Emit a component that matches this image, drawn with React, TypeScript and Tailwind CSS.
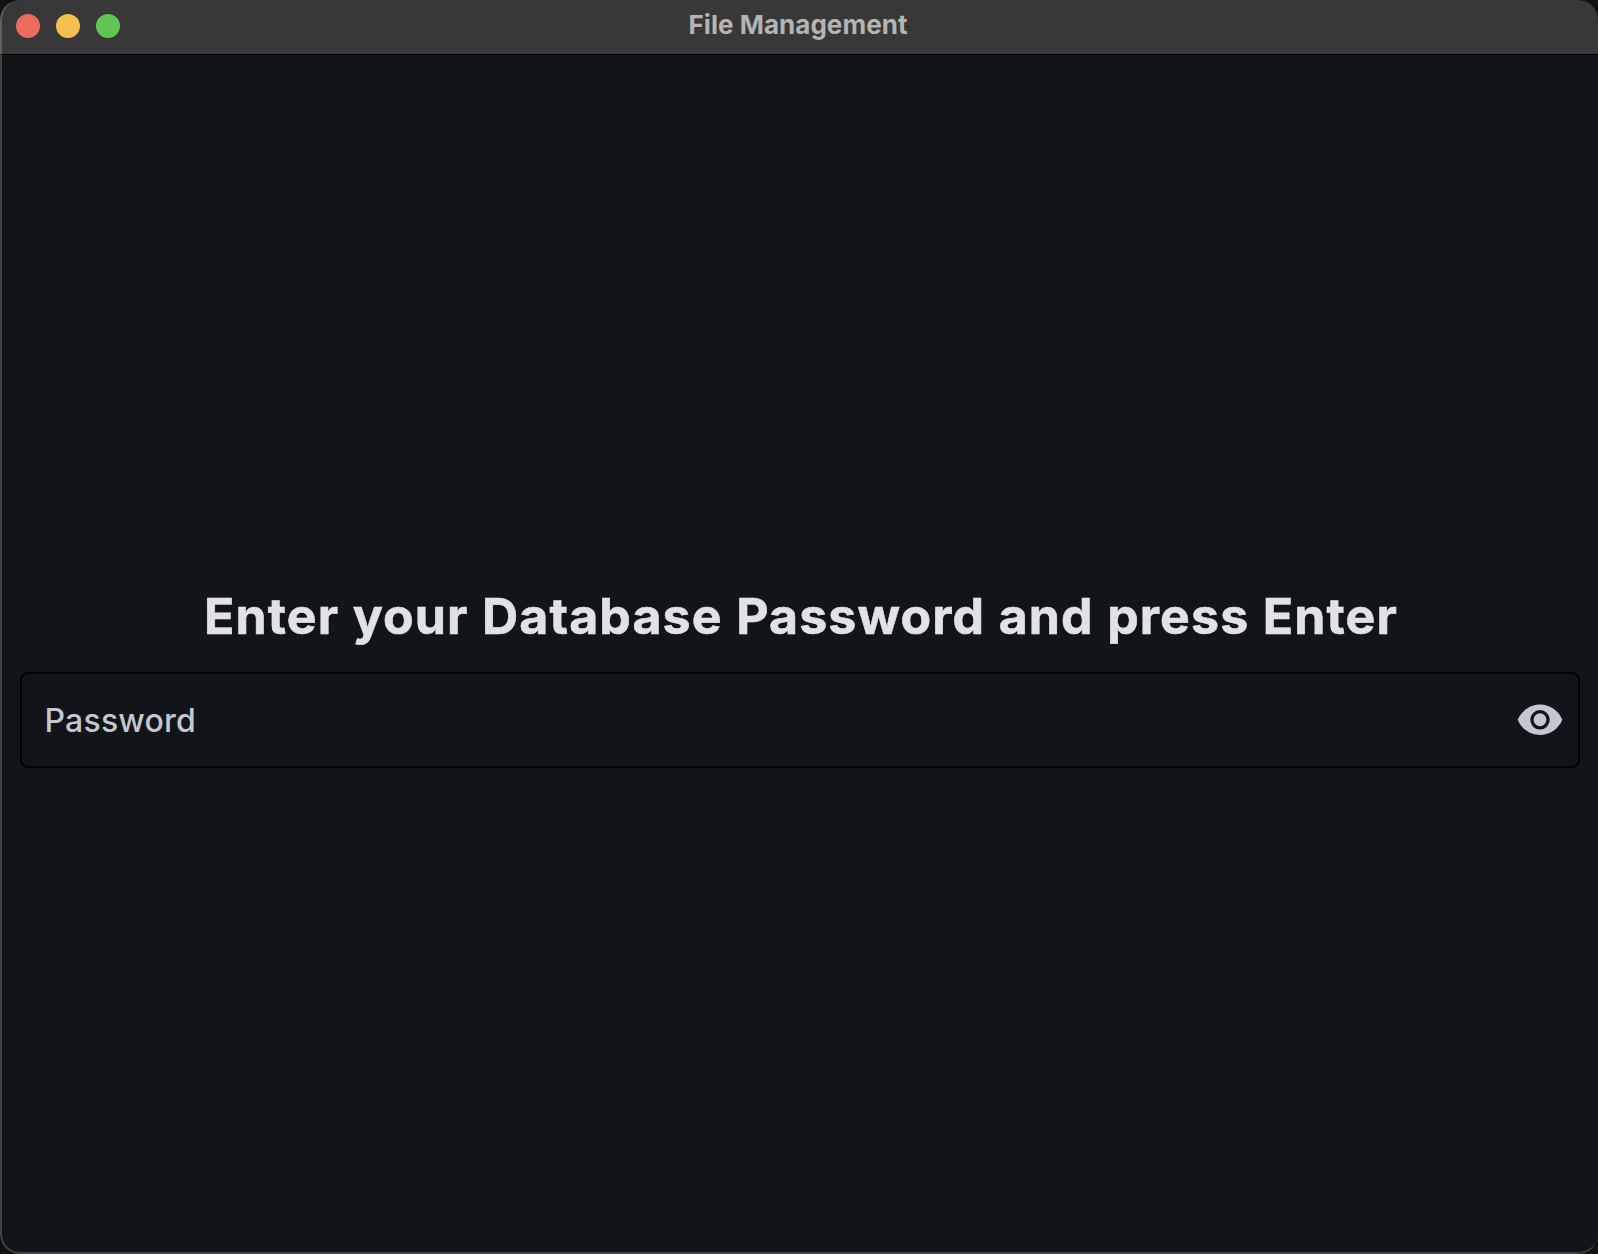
import { useState } from "react";

function TitleBar() {
  return (
    <header className="relative flex h-[55px] shrink-0 items-center border-b border-black bg-[#383838] pl-4 pb-[3px]">
      <div className="flex gap-4">
        <span className="size-6 rounded-full bg-[#ec6a5e]" />
        <span className="size-6 rounded-full bg-[#f4bf4f]" />
        <span className="size-6 rounded-full bg-[#61c554]" />
      </div>
      <h1 className="absolute right-0.5 left-0 top-[9px] text-center text-[26px] leading-8 font-bold tracking-[0.03px] text-[#b4b4b2]">
        File Management
      </h1>
    </header>
  );
}

function PasswordField() {
  const [visible, setVisible] = useState(false);
  return (
    <div className="flex h-24 items-center rounded-lg border-2 border-black pr-[14px] pl-[22.5px]">
      <input
        type={visible ? "text" : "password"}
        placeholder="Password"
        className="mt-0.5 min-w-0 flex-1 bg-transparent text-[32px] leading-10 font-[450] tracking-[0.2px] text-[#e1e2e8] outline-none placeholder:text-[#c3c7cf]"
      />
      <button aria-label="Show password" onClick={() => setVisible(!visible)}>
        <svg viewBox="0 0 24 24" className="block size-12">
          <path
            className="fill-[#c3c7cf]"
            d="M12 4.3C7 4.3 2.63 7.5.85 11.9c1.78 4.4 6.15 7.6 11.15 7.6s9.37-3.2 11.15-7.6C21.37 7.5 17 4.3 12 4.3z"
          />
          <circle cx="12" cy="11.9" r="4.05" className="fill-none stroke-[#111418] stroke-[1.65]" />
        </svg>
      </button>
    </div>
  );
}

export default function App() {
  return (
    <div className="h-screen bg-[#121212] font-['Inter',sans-serif]">
      <div className="relative flex h-full flex-col overflow-hidden rounded-[20px] bg-[#111418]">
        <TitleBar />
        <main className="flex flex-1 flex-col pr-[18px] pl-5 pt-[531px]">
          <h2 className="mb-[26px] pl-0.5 text-center text-[50px] leading-[60px] font-bold tracking-[1.12px] text-[#e1e2e8] [-webkit-text-stroke:0.6px_#e1e2e8] [word-spacing:0.6px]">
            Enter your Database Password and press Enter
          </h2>
          <PasswordField />
        </main>
        <div className="pointer-events-none absolute inset-0 rounded-[20px] border-b-2 border-l-2 border-b-white/20 border-l-white/20" />
      </div>
    </div>
  );
}
